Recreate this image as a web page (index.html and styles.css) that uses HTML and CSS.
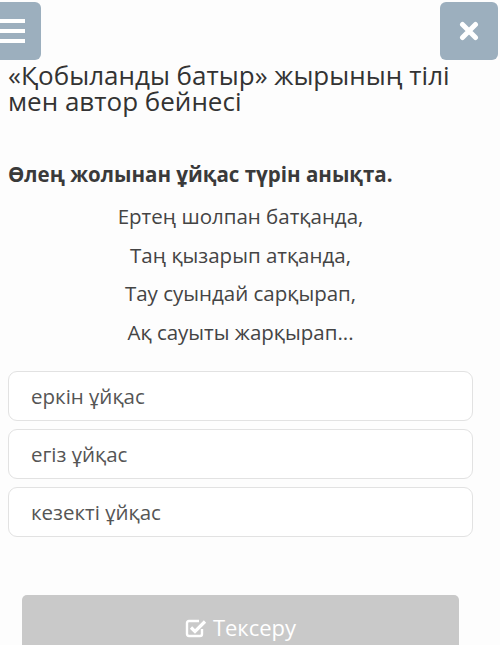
FILE: index.html
```html
<!DOCTYPE html>
<html>
<head>
<meta charset="utf-8">
<link rel="stylesheet" href="styles.css">
</head>
<body>
<div class="header">
  <div class="menu-btn">
    <span class="bar"></span><span class="bar"></span><span class="bar"></span>
  </div>
  <div class="close-btn">
    <svg width="20" height="20" viewBox="0 0 20 20"><path d="M3.5 3.5 L16.5 16.5 M16.5 3.5 L3.5 16.5" stroke="#fff" stroke-width="5" stroke-linecap="round"/></svg>
  </div>
</div>
<div class="content">
  <h1 class="title">«Қобыланды батыр» жырының тілі мен автор бейнесі</h1>
  <p class="question">Өлең жолынан ұйқас түрін анықта.</p>
  <div class="poem">
    <p>Ертең шолпан батқанда,</p>
    <p>Таң қызарып атқанда,</p>
    <p>Тау суындай сарқырап,</p>
    <p>Ақ сауыты жарқырап...</p>
  </div>
  <div class="options">
    <div class="option">еркін ұйқас</div>
    <div class="option">егіз ұйқас</div>
    <div class="option">кезекті ұйқас</div>
  </div>
  <div class="check-wrap">
    <div class="check-btn">
      <svg class="check-icon" width="22" height="22" viewBox="0 0 22 22"><path d="M17 12 V17 Q17 19 15 19 H4 Q2 19 2 17 V6 Q2 4 4 4 H14" fill="none" stroke="#fff" stroke-width="2.4"/><path d="M6 10.5 L10 14.5 L20 4.5" fill="none" stroke="#fff" stroke-width="3.2"/></svg>
      <span>Тексеру</span>
    </div>
  </div>
</div>
</body>
</html>
```

FILE: styles.css
```css
html, body {
  margin: 0;
  padding: 0;
  background: #fdfdfd;
  font-family: "Open Sans", "Noto Sans", sans-serif;
  color: #333;
  overflow: hidden;
}

.header {
  display: flex;
  justify-content: space-between;
  padding-top: 2px;
  height: 58px;
}

.menu-btn {
  width: 58px;
  height: 58px;
  margin-left: -17px;
  background: #9cafbe;
  border-radius: 6px;
  display: flex;
  flex-direction: column;
  justify-content: center;
  align-items: center;
  gap: 6px;
}

.menu-btn .bar {
  display: block;
  width: 26px;
  height: 4px;
  background: #fff;
}

.close-btn {
  width: 58px;
  height: 58px;
  margin-right: 2px;
  background: #9cafbe;
  border-radius: 6px;
  display: flex;
  justify-content: center;
  align-items: center;
}

.content {
  padding: 0 27px 0 8px;
}

.title {
  margin: 2px 0 0;
  font-size: 26px;
  font-weight: 400;
  line-height: 26px;
  color: #333;
}

.question {
  margin: 48px 0 0;
  font-size: 20.5px;
  font-weight: 700;
  color: #3a3a3a;
  line-height: 24px;
}

.poem {
  margin-top: 11px;
  text-align: center;
}

.poem p {
  margin: 0;
  font-size: 20.5px;
  line-height: 38.5px;
  color: #444;
}

.options {
  margin-top: 20px;
  display: flex;
  flex-direction: column;
  gap: 8px;
}

.option {
  border: 1px solid #e2e2e2;
  border-radius: 9px;
  background: #fff;
  box-sizing: border-box;
  height: 50px;
  display: flex;
  align-items: center;
  padding-left: 22px;
  font-size: 20.5px;
  color: #555;
}

.check-wrap {
  margin-top: 58px;
  padding: 0 14px;
}

.check-btn {
  height: 60px;
  background: #c9c9c9;
  border-radius: 5px;
  display: flex;
  justify-content: center;
  align-items: center;
  gap: 6px;
  color: #fff;
  font-size: 22px;
  padding-top: 4px;
  box-sizing: border-box;
}

.check-icon {
  margin-top: 1px;
}
```
